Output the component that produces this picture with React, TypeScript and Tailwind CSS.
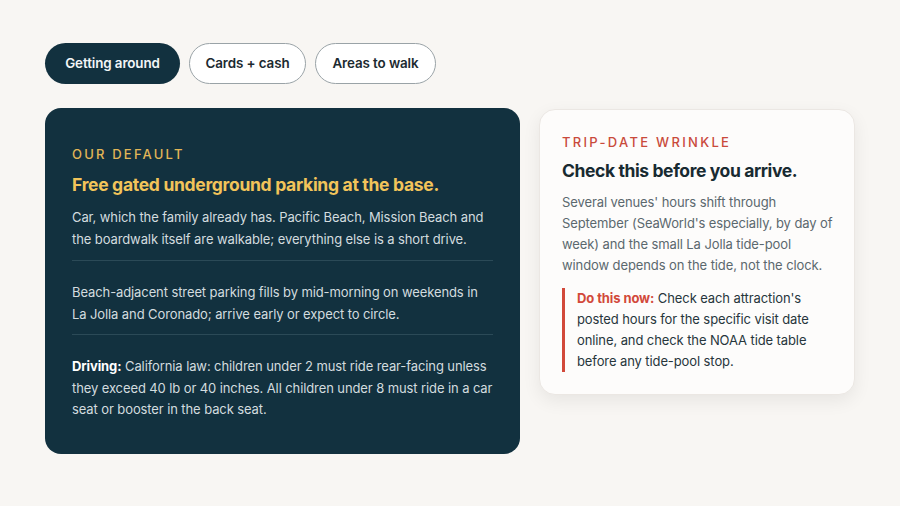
import React from "react";

export default function App() {
  const font = { fontFamily: "Inter, 'Noto Sans', sans-serif" };
  return (
    <div className="min-h-[506px] w-[900px] bg-[#f8f6f3] pl-[45px] pt-[43px]" style={font}>
      <div className="flex gap-[9px]">
        <button className="h-[41px] w-[135px] rounded-full bg-[#12313f] text-[13.4px] font-semibold tracking-[-0.1px] text-[#f3f6f7]">
          Getting around
        </button>
        <button className="h-[41px] w-[117px] rounded-full border border-[#9aa3a7] bg-white text-[13.4px] font-semibold tracking-[-0.1px] text-[#1c2a30]">
          Cards + cash
        </button>
        <button className="h-[41px] w-[121px] rounded-full border border-[#9aa3a7] bg-white text-[13.4px] font-semibold tracking-[-0.1px] text-[#1c2a30]">
          Areas to walk
        </button>
      </div>

      <div className="mt-[24px] flex items-start gap-[19px]">
        <div className="w-[475px] rounded-[16px] bg-[#12313f] px-[27px] pb-[33px] pt-[36px]">
          <div className="text-[13px] font-medium leading-[20px] tracking-[2.2px] text-[#e2b657]">OUR DEFAULT</div>
          <div className="mt-[9px] text-[17.5px] font-bold leading-[24px] tracking-[-0.3px] text-[#f2c45a]">
            Free gated underground parking at the base.
          </div>
          <div className="mt-[10px] border-b border-[#2b4a57] pb-[10px] text-[13px] leading-[21.5px] tracking-[-0.1px] text-[#d3dcdf]">
            Car, which the family already has. Pacific Beach, Mission Beach and
            <br />
            the boardwalk itself are walkable; everything else is a short drive.
          </div>
          <div className="mt-[21px] border-b border-[#2b4a57] pb-[9px] text-[13px] leading-[21.5px] tracking-[-0.1px] text-[#d3dcdf]">
            Beach-adjacent street parking fills by mid-morning on weekends in La Jolla and Coronado; arrive early or expect to circle.
          </div>
          <div className="mt-[21px] text-[13px] leading-[21.5px] tracking-[-0.1px] text-[#d3dcdf]">
            <span className="font-bold text-white">Driving:</span> California law: children under 2 must ride rear-facing unless they exceed 40 lb or 40 inches. All children under 8 must ride in a car seat or booster in the back seat.
          </div>
        </div>

        <div className="mt-px w-[316px] rounded-[16px] border border-[#ebe7e3] bg-[#fdfcfb] py-[22px] pl-[22px] pr-[16px] shadow-[0_6px_18px_rgba(0,0,0,0.07)]">
          <div className="text-[13px] font-medium leading-[20px] tracking-[2.3px] text-[#c94a3b]">TRIP-DATE WRINKLE</div>
          <div className="mt-[7px] text-[17.5px] font-bold leading-[24px] tracking-[-0.4px] text-[#182a31]">
            Check this before you arrive.
          </div>
          <div className="mt-[9px] text-[13px] leading-[21px] tracking-[-0.1px] text-[#5b686e]">
            Several venues' hours shift through
            <br />
            September (SeaWorld's especially, by day of week) and the small La Jolla tide-pool window depends on the tide, not the clock.
          </div>
          <div className="mt-[12px] border-l-[3px] border-[#d2493a] pl-[12px] pr-[6px] text-[13px] leading-[21px] tracking-[-0.1px] text-[#27363c]">
            <span className="font-bold text-[#d2493a]">Do this now:</span> Check each attraction's posted hours for the specific visit date online, and check the NOAA tide table before any tide-pool stop.
          </div>
        </div>
      </div>
    </div>
  );
}
